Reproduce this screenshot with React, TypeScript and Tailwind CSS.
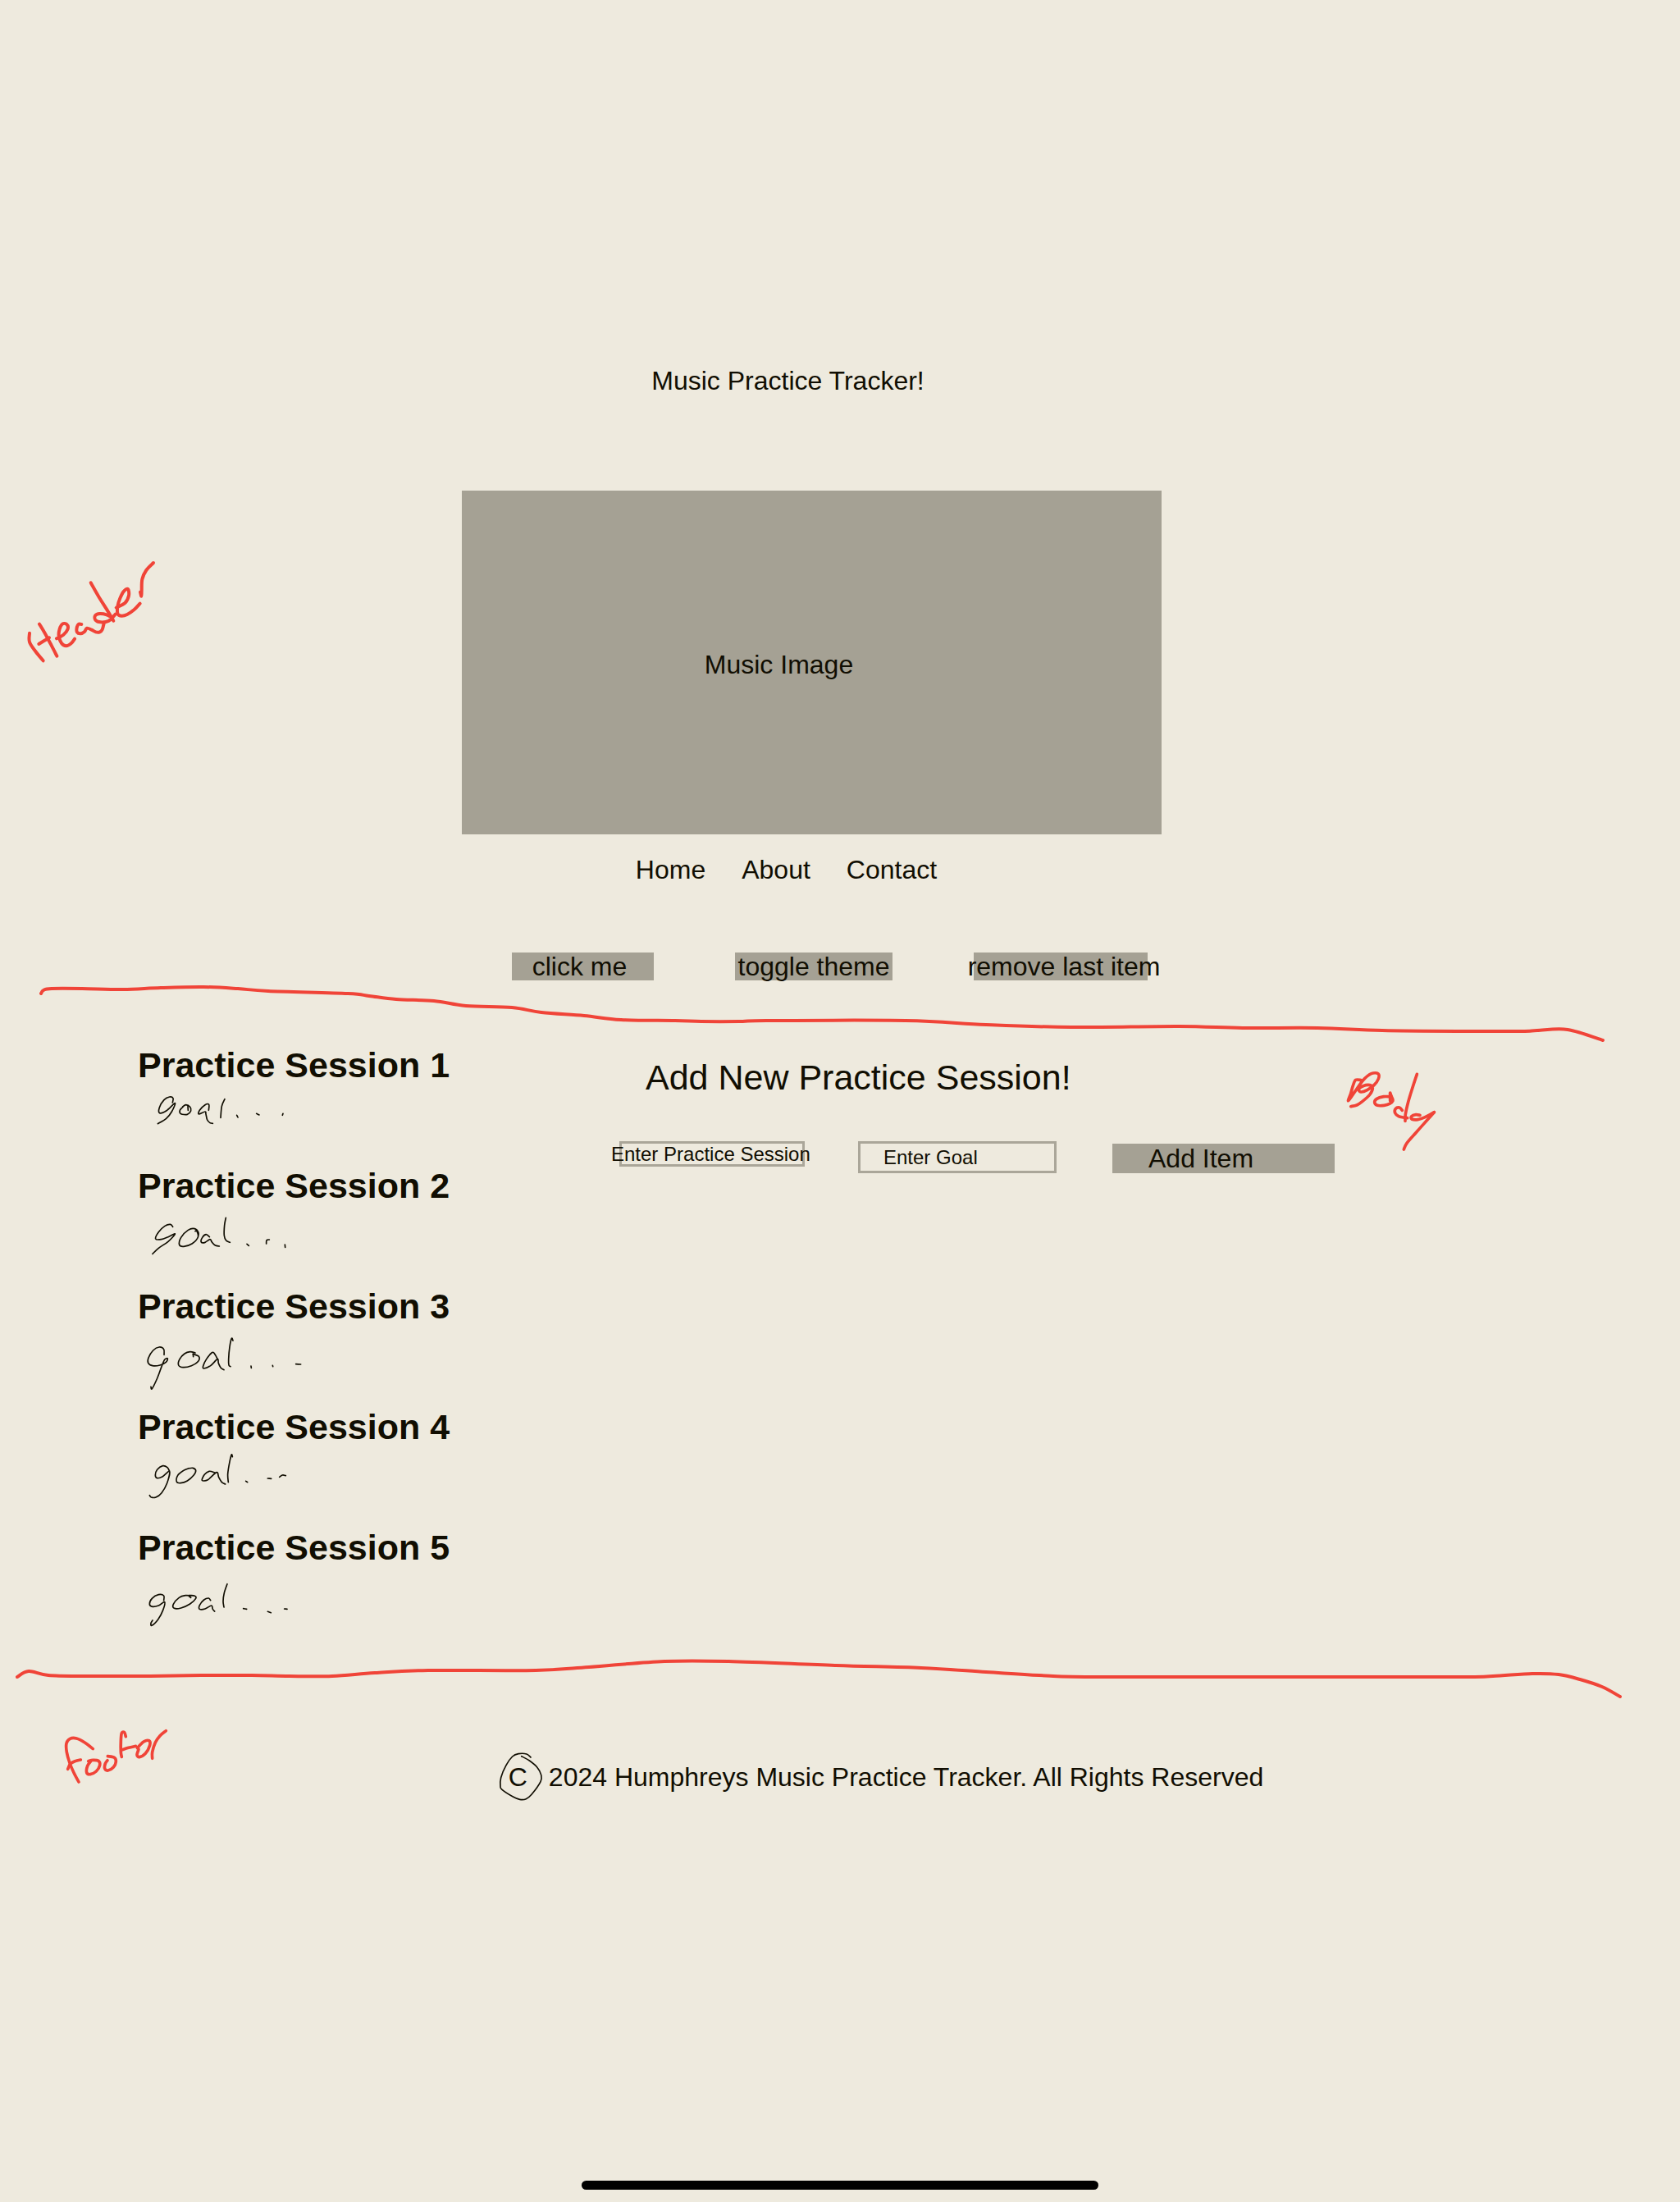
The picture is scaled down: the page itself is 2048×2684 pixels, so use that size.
import type { ReactNode } from "react";

type Points = string;

/** Turns "x,y x,y ..." into a smooth curve running through every point. */
function smooth(points: Points): string {
  const p = points.trim().split(/\s+/).map((s) => s.split(",").map(Number));
  let d = `M${p[0][0]} ${p[0][1]}`;
  for (let i = 0; i < p.length - 1; i++) {
    const a = p[Math.max(i - 1, 0)];
    const b = p[i];
    const c = p[i + 1];
    const e = p[Math.min(i + 2, p.length - 1)];
    d += `C${b[0] + (c[0] - a[0]) / 6} ${b[1] + (c[1] - a[1]) / 6} ${c[0] - (e[0] - b[0]) / 6} ${
      c[1] - (e[1] - b[1]) / 6
    } ${c[0]} ${c[1]}`;
  }
  return d;
}

function Ink({
  viewBox,
  strokes,
  width,
  className,
  label,
}: {
  viewBox: string;
  strokes: Points[];
  width: number;
  className: string;
  label?: string;
}) {
  return (
    <svg
      viewBox={viewBox}
      className={className}
      fill="none"
      stroke="currentColor"
      strokeWidth={width}
      strokeLinecap="round"
      strokeLinejoin="round"
      role={label ? "img" : undefined}
      aria-label={label}
      aria-hidden={label ? undefined : true}
    >
      {strokes.map((s) => (
        <path key={s} d={smooth(s)} />
      ))}
    </svg>
  );
}

const headerNote = [
  "48,305 48,338 70,372 98,406",
  "84,272 104,305 128,350 148,389",
  "82,345 100,334 120,322",
  "147,325 172,311 188,290 184,273 168,272 158,290 155,315 165,342 182,352 200,343 213,326",
  "238,273 228,272 221,285 222,302 235,307 249,300 258,287 275,293 290,301 305,301 314,292 320,270",
  "272,121 300,170 330,218 355,260",
  "362,236 338,260 308,265 289,257 288,241 305,234 330,238 352,250",
  "365,212 397,195 411,168 408,144 393,152 379,178 370,208 371,236 385,242 405,237 430,220 452,197",
  "453,155 457,170 458,150 460,108 475,75 501,48",
];

const bodyNote = [
  "118,80 98,79 88,100 80,128 71,155 95,122 125,80 155,56 180,56 181,75 165,98 140,116 117,123 109,113 125,101 150,98 160,108 150,132 122,158 102,171 80,176",
  "224,126 224,155",
  "222,140 200,140 175,148 167,161 177,172 202,172 222,166 234,155 230,142 224,128",
  "322,58 305,110 290,160 280,205 279,229",
  "268,190 258,180 244,184 242,200 255,212 272,216 287,218",
  "333,208 318,206 302,212 303,222 325,224 352,215 385,197",
  "385,197 360,225 320,270 285,310 274,333",
];

const footerNote = [
  "160,128 130,105 100,90 76,91 63,108 64,140 75,180 90,215 108,249",
  "68,202 77,183 95,173 115,168",
  "152,173 140,190 137,215 150,221 172,210 185,188 180,172 160,169 143,173",
  "214,155 238,160 244,175 235,195 215,207 203,200 205,182 213,170",
  "280,83 275,68 265,70 262,100 262,140 265,157",
  "265,132 290,124 316,118",
  "322,125 345,102 365,98 368,115 352,145 330,158 321,150 327,130",
  "377,163 377,140 388,105 405,80 427,62",
];

const upperRule = [
  "50,1210 53,1206 63,1204 100,1204 150,1205 196,1203 248,1202 290,1204 327,1207 424,1210 450,1213 483,1217 529,1219 568,1225 624,1227 660,1233 712,1237 757,1242 823,1243 855,1244 901,1244 934,1243 1104,1243 1202,1248 1306,1251 1437,1250 1515,1252 1606,1252 1685,1255 1789,1256 1855,1256 1874,1255 1911,1254 1954,1267",
];

const lowerRule = [
  "21,2043 35,2036 59,2041 105,2042 183,2042 248,2041 307,2041 353,2042 405,2042 457,2038 522,2035 653,2035 718,2031 810,2024 888,2024 1019,2029 1123,2032 1202,2037 1267,2041 1332,2043 1580,2043 1780,2043 1820,2042 1868,2039 1900,2040 1926,2046 1953,2055 1975,2067",
];

const sessions = [
  {
    name: "Practice Session 1",
    viewBox: "54 156 600 297",
    strokes: [
      "181,222 183,206 170,201 150,212 133,240 134,260 158,252 190,224 178,255 158,280 127,299",
      "222,234 208,250 212,263 235,265 248,252 245,238 230,230 218,237",
      "237,236 238,250",
      "313,250 314,229 300,230 280,250 277,264 300,255 303,264 308,285 318,296 328,298",
      "372,209 361,235 357,277",
      "416,268 420,276",
      "488,262 498,267",
      "583,268 585,262",
    ],
  },
  {
    name: "Practice Session 2",
    viewBox: "54 597 600 297",
    strokes: [
      "182,676 173,667 153,673 130,695 119,720 140,722 165,713 190,702 165,730 130,754 108,775",
      "264,692 270,692 274,714 252,738 222,748 206,742 212,715 238,688 262,683 276,698 274,714",
      "316,713 304,704 290,715 286,732 300,733 318,722 325,732 336,743 352,747",
      "376,643 371,670 370,708 377,726 391,733",
      "453,739 460,745",
      "524,738 525,725 535,723",
      "592,741 593,751",
    ],
  },
  {
    name: "Practice Session 3",
    viewBox: "54 168 600 297",
    strokes: [
      "150,274 149,254 132,246 110,258 93,285 92,304 108,314 135,312 157,301 163,288 152,292 140,320 125,360 106,398 102,391",
      "257,281 256,271",
      "256,271 277,280 275,298 250,314 220,320 203,312 207,290 225,270 245,263 264,267",
      "345,288 333,268 324,267 305,290 293,315 296,324 320,314 345,290 349,305 357,321 369,329",
      "402,222 397,214 390,245 386,290 387,312 393,317",
      "468,315 469,322",
      "547,313 548,317",
      "632,308 650,309",
    ],
  },
  {
    name: "Practice Session 4",
    viewBox: "54 609 600 297",
    strokes: [
      "170,700 162,686 145,680 125,694 118,714 125,725 145,719 170,700 161,743 141,779 120,795 103,795 97,788",
      "238,690 255,688 266,697 258,715 235,735 210,743 196,738 200,715 220,698 240,689",
      "335,705 315,700 298,712 289,733 310,731 342,704 350,722 361,740 374,747",
      "400,647 397,639 390,665 383,710 385,740",
      "449,736 455,740",
      "529,726 542,727",
      "572,721 583,714 595,716",
    ],
  },
  {
    name: "Practice Session 5",
    viewBox: "54 150 600 297",
    strokes: [
      "149,272 149,255 130,251 106,265 97,286 108,295 130,291 152,278 146,308 128,342 105,364 102,355 108,345",
      "248,262 240,254 262,256 266,265 245,285 212,300 187,301 184,286 205,262 228,254 250,255",
      "320,272 313,264 296,270 280,290 280,304 300,303 323,291 328,304 335,312",
      "381,212 370,245 366,275 369,297",
      "440,302 452,304",
      "529,313 541,317",
      "590,303 600,304",
    ],
  },
];

const copyrightRing = [
  "131,92 160,108 188,132 203,160 201,185 168,232 148,248 125,250 100,240 60,214 54,202 56,170 75,125 98,93 120,83 150,84 165,96",
];

function GrayButton({ className, children }: { className: string; children: ReactNode }) {
  return (
    <button type="button" className={`flex items-center whitespace-nowrap bg-[#a5a194] ${className}`}>
      {children}
    </button>
  );
}

function Field({ label, boxClass, inputClass }: { label: string; boxClass: string; inputClass: string }) {
  return (
    <div className={`flex shrink-0 items-center justify-center border-3 border-[#aaa699] ${boxClass}`}>
      <input
        type="text"
        aria-label={label}
        placeholder={label}
        className={`h-7 shrink-0 bg-transparent text-[24px] leading-7 outline-none placeholder:text-[#110e02] placeholder:opacity-100 ${inputClass}`}
      />
    </div>
  );
}

export default function App() {
  return (
    <div className="flex min-h-screen flex-col bg-[#eeeade] font-['Liberation_Sans',Arial,sans-serif] text-[32px] leading-10 text-[#110e02]">
      <header className="relative flex flex-col items-center pt-[444px] pr-[69px]">
        <Ink
          label="Header"
          viewBox="0 0 570 450"
          strokes={headerNote}
          width={12}
          className="absolute top-[670px] left-5 w-[190px] text-[#f04438]"
        />
        <h1 className="pr-[58px]">Music Practice Tracker!</h1>
        <div className="mt-[114px] flex h-[419px] w-[853px] items-center justify-center bg-[#a5a194] pt-1 pr-20">
          Music Image
        </div>
        <nav className="mt-[23px] flex gap-11 pr-[62px]">
          <a href="#home">Home</a>
          <a href="#about">About</a>
          <a href="#contact">Contact</a>
        </nav>
        <div className="mt-[81px] flex gap-[99px] pl-11">
          <GrayButton className="h-[34px] w-[173px] justify-center pr-2">click me</GrayButton>
          <GrayButton className="h-[34px] w-[192px] justify-center">toggle theme</GrayButton>
          <GrayButton className="h-[34px] w-[212px] justify-center pl-2">remove last item</GrayButton>
        </div>
      </header>

      <Ink viewBox="0 1194 2048 79" strokes={upperRule} width={4} className="w-full text-[#f04438]" />

      <main className="relative flex pl-[168px]">
        <Ink
          label="Body"
          viewBox="0 0 450 390"
          strokes={bodyNote}
          width={11}
          className="absolute top-4 left-[1620px] w-[150px] text-[#f04438]"
        />
        <ul className="w-[587px] shrink-0">
          {sessions.map((s) => (
            <li key={s.name}>
              <h2 className="text-[43px] leading-[48px] font-bold">{s.name}</h2>
              <Ink
                label="goal..."
                viewBox={s.viewBox}
                strokes={s.strokes}
                width={5}
                className="h-[99px] w-[200px]"
              />
            </li>
          ))}
        </ul>
        <form className="pt-[15px]">
          <h2 className="pl-8 text-[43px] leading-[48px]">Add New Practice Session!</h2>
          <div className="mt-[54px] flex items-end gap-[68px]">
            <div className="flex items-start gap-[65px]">
              <Field label="Enter Practice Session" boxClass="h-[31px] w-[226px]" inputClass="w-[246px]" />
              <Field label="Enter Goal" boxClass="h-[39px] w-[242px]" inputClass="w-full pl-7" />
            </div>
            <GrayButton className="h-[36px] w-[271px] pl-11">Add Item</GrayButton>
          </div>
        </form>
      </main>

      <Ink viewBox="0 2008 2048 80" strokes={lowerRule} width={4} className="w-full text-[#f04438]" />

      <footer className="relative flex justify-center gap-[26px] pt-[57px] pl-28">
        <Ink
          label="Footer"
          viewBox="0 0 480 300"
          strokes={footerNote}
          width={11}
          className="absolute top-0 left-[60px] w-40 text-[#f04438]"
        />
        <span className="relative">
          C
          <Ink
            viewBox="45 72 165 183"
            strokes={copyrightRing}
            width={5}
            className="absolute -top-3 -left-[13px] w-[55px] max-w-none"
          />
        </span>
        <p>2024 Humphreys Music Practice Tracker. All Rights Reserved</p>
      </footer>

      <div className="mx-auto mt-auto mb-[15px] h-[11px] w-[630px] max-w-full rounded-full bg-black" />
    </div>
  );
}
